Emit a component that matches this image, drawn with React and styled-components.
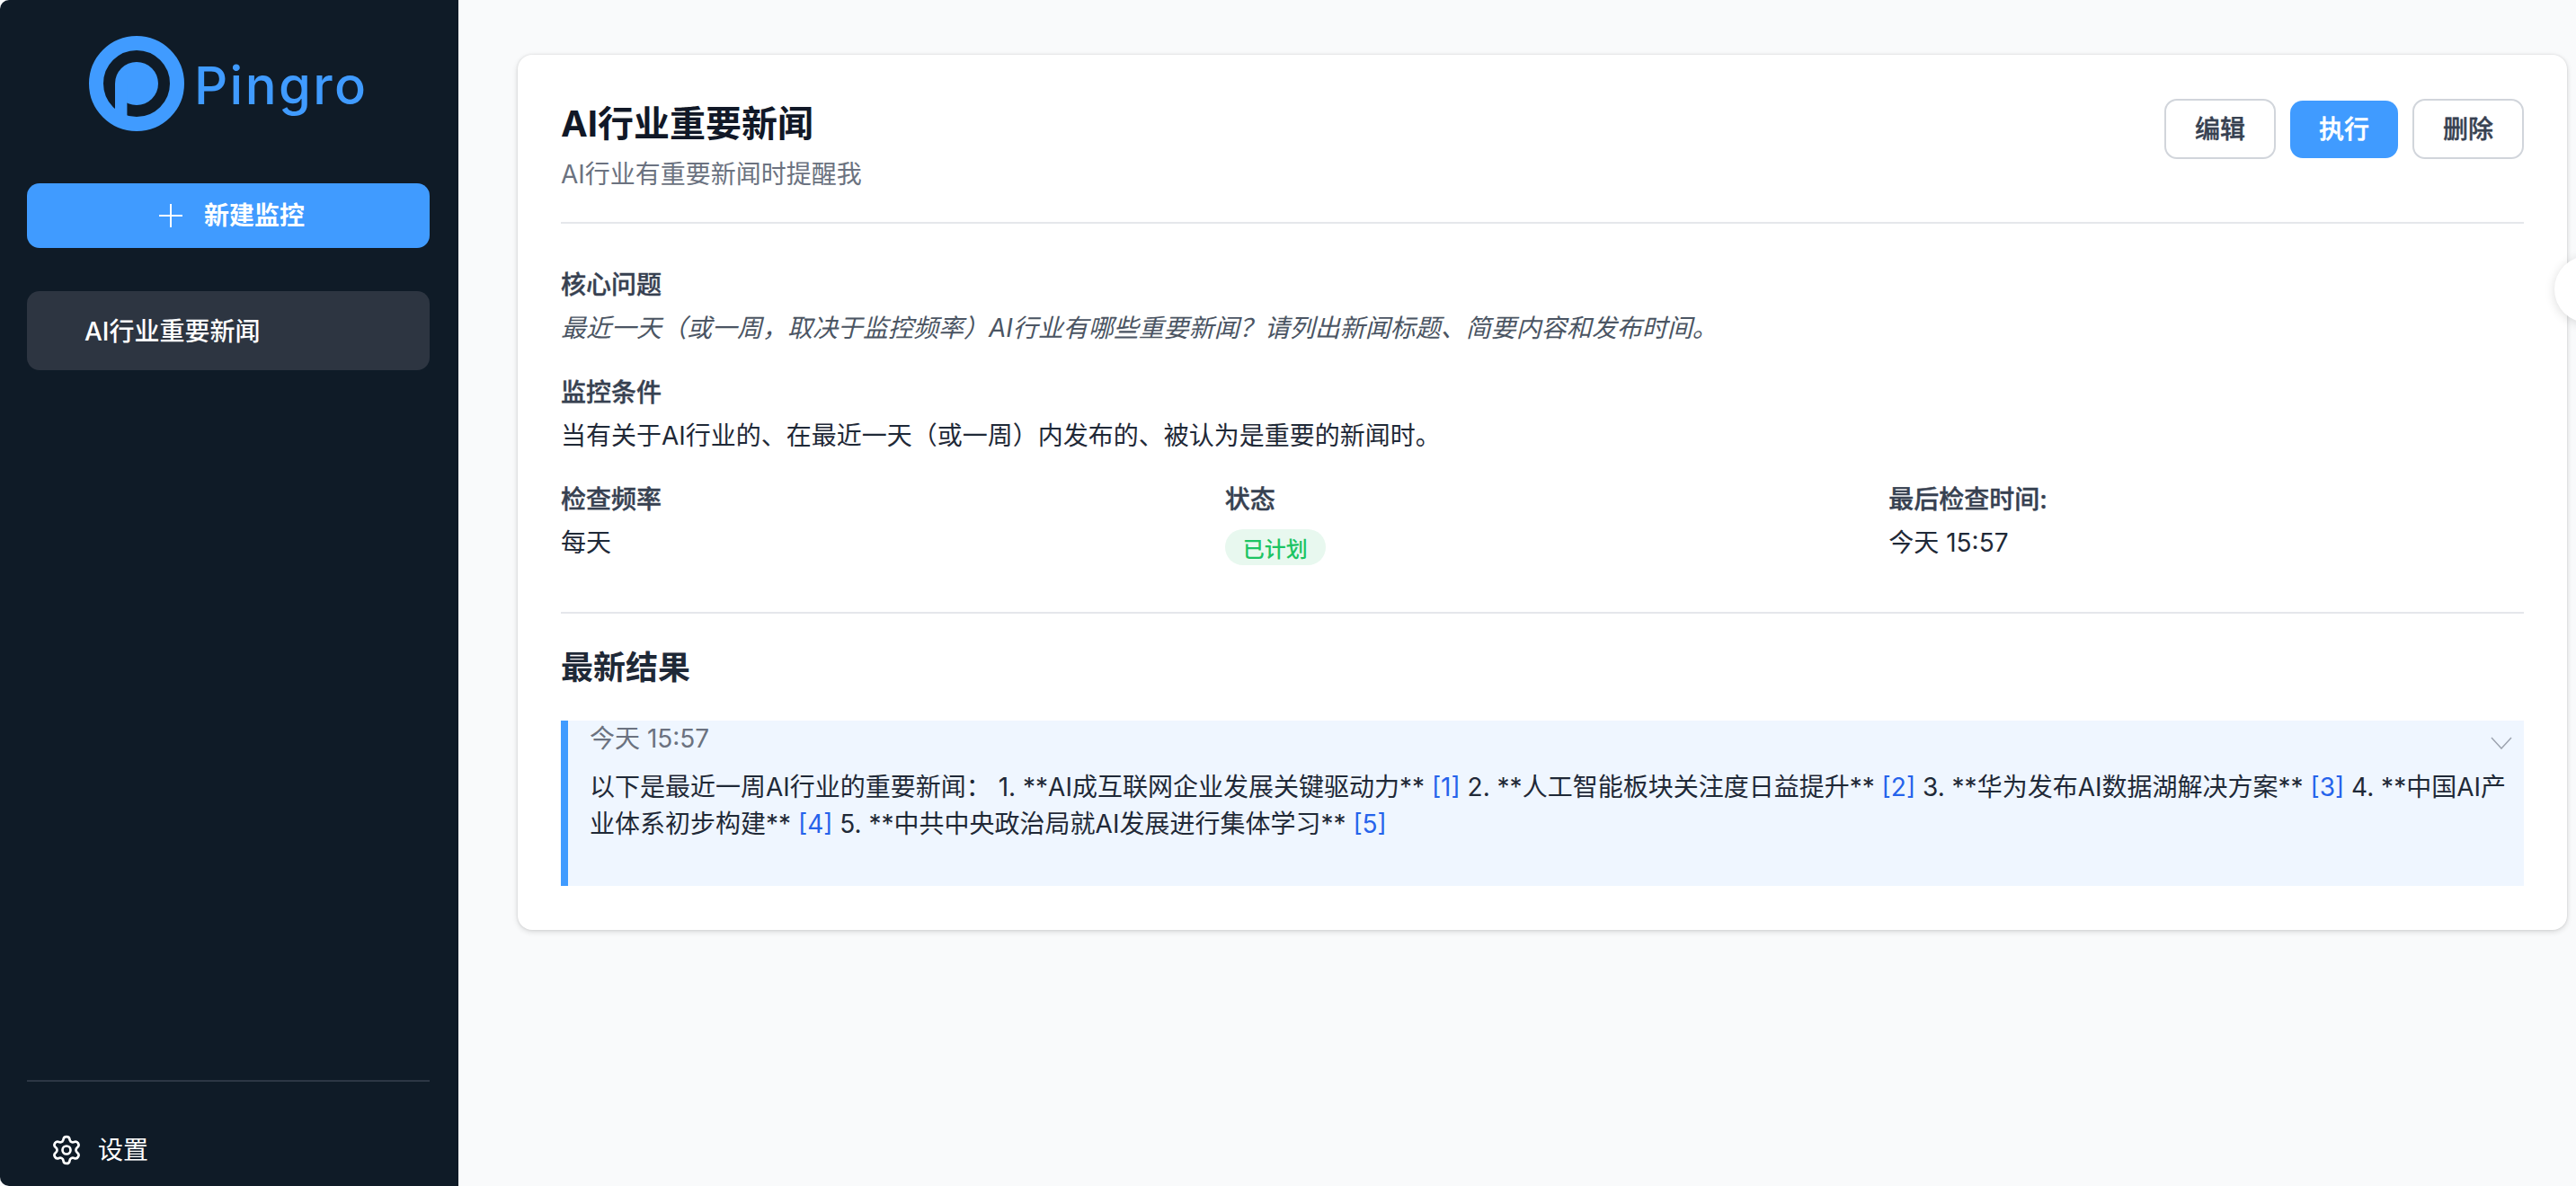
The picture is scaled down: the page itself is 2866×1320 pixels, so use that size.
import React from "react";
import styled, { createGlobalStyle } from "styled-components";
import { Settings } from "lucide-react";

const Global = createGlobalStyle`
  html, body { margin: 0; padding: 0; background: #fff; }
  body { font-family: Inter, "Noto Sans CJK SC", sans-serif; overflow: hidden; }
  * { box-sizing: border-box; }
`;

const Shell = styled.div`
  position: relative;
  display: flex;
  width: 100%;
  height: 1320px;
  overflow: hidden;
  background: #f9fafb;
`;

const Sidebar = styled.aside`
  display: flex;
  flex-direction: column;
  flex: 0 0 510px;
  padding: 0 32px 0 30px;
  background: #0f1b27;
  border-radius: 10px 0 0 10px;
`;

const Brand = styled.div`
  display: flex;
  align-items: center;
  gap: 11px;
  height: 204px;
  padding: 0 0 19px 69px;
`;

const BrandName = styled.span`
  font-family: Inter, sans-serif;
  font-size: 58px;
  line-height: 1;
  font-weight: 500;
  letter-spacing: 2.4px;
  color: #409bff;
  padding-top: 4px;
`;

const NewButton = styled.button`
  display: flex;
  align-items: center;
  justify-content: center;
  gap: 24px;
  width: 100%;
  height: 72px;
  flex: none;
  padding: 0 0 0 8px;
  border: 0;
  border-radius: 14px;
  background: #409bff;
  color: #fff;
  font: 600 28px/40px Inter, "Noto Sans CJK SC", sans-serif;
`;

const NavItem = styled.div`
  display: flex;
  align-items: center;
  height: 88px;
  margin-top: 48px;
  padding: 0 0 2px 64px;
  border-radius: 14px;
  background: #2d3541;
  color: #fff;
  font-size: 28px;
  font-weight: 500;
`;

const Footer = styled.div`
  margin-top: auto;
  border-top: 2px solid #2d3745;
  height: 118px;
  padding: 58px 0 0 26px;
  display: flex;
  align-items: flex-start;
  gap: 17px;
  color: #fff;
  font-size: 28px;
  line-height: 36px;
  font-weight: 400;
`;

const Main = styled.main`
  flex: 1;
  min-width: 0;
  padding: 61px 10px 0 66px;
`;

const Card = styled.section`
  height: 974px;
  padding: 49px 48px 0;
  background: #fff;
  border-radius: 16px;
  box-shadow: 0 2px 6px rgba(0, 0, 0, 0.14), 0 0 3px rgba(0, 0, 0, 0.1);
`;

const Header = styled.header`
  display: flex;
  justify-content: space-between;
  align-items: flex-start;
  height: 139px;
  border-bottom: 2px solid #e5e7eb;
`;

const Title = styled.h1`
  margin: 0;
  font-size: 40px;
  line-height: 56px;
  font-weight: 700;
  color: #111827;
`;

const Subtitle = styled.p`
  margin: 8px 0 0;
  font-size: 28px;
  line-height: 40px;
  color: #6b7280;
`;

const Actions = styled.div`
  display: flex;
  align-items: center;
  gap: 16px;
  height: 67px;
`;

const Action = styled.button`
  height: ${(p) => (p.$primary ? "64px" : "67px")};
  width: ${(p) => (p.$primary ? "120px" : "124px")};
  border: ${(p) => (p.$primary ? "0" : "2px solid #d1d5db")};
  border-radius: 14px;
  background: ${(p) => (p.$primary ? "#409bff" : "#fff")};
  color: ${(p) => (p.$primary ? "#fff" : "#374151")};
  font: 500 28px/40px Inter, "Noto Sans CJK SC", sans-serif;
  -webkit-text-stroke: 0.4px currentColor;
`;

const Block = styled.div`
  margin-top: ${(p) => p.$top}px;
`;

const Label = styled.div`
  font-size: 28px;
  line-height: 40px;
  font-weight: 500;
  -webkit-text-stroke: 0.4px currentColor;
  color: #374151;
  margin-bottom: 8px;
`;

const Question = styled.div`
  font-size: 28px;
  line-height: 40px;
  font-style: italic;
  color: #4b5563;
`;

const Value = styled.div`
  font-size: 28px;
  line-height: 40px;
  color: #1f2937;
`;

const Meta = styled.div`
  display: grid;
  grid-template-columns: repeat(3, 1fr);
  column-gap: 32px;
  margin-top: 31px;
  height: 147px;
  border-bottom: 2px solid #e5e7eb;
`;

const Badge = styled.span`
  display: inline-flex;
  align-items: center;
  height: 40px;
  padding: 0 20px;
  margin-top: 5px;
  border-radius: 20px;
  background: #e8f8ef;
  color: #1cc463;
  font-size: 24px;
  font-weight: 500;
`;

const ResultsTitle = styled.h2`
  margin: 38px 0 0;
  font-size: 36px;
  line-height: 44px;
  font-weight: 700;
  color: #1f2937;
`;

const Result = styled.article`
  position: relative;
  margin-top: 37px;
  height: 184px;
  padding: 0 16px 0 24px;
  border-left: 8px solid #409bff;
  background: #eff6ff;
`;

const Time = styled.div`
  font-size: 28px;
  line-height: 40px;
  color: #6b7280;
`;

const Body = styled.p`
  margin: 14px 0 0;
  font-size: 28px;
  line-height: 41px;
  color: #1f2937;
`;

const Ref = styled.a`
  color: #2563eb;
`;

const Chevron = styled.svg`
  position: absolute;
  top: 18px;
  right: 13px;
  width: 24px;
  height: 14px;
  fill: none;
  stroke: #9ca3af;
  stroke-width: 1.5;
`;

const Handle = styled.div`
  position: absolute;
  top: 285px;
  left: 2842px;
  width: 74px;
  height: 74px;
  border-radius: 50%;
  background: #fff;
  box-shadow: 0 2px 12px rgba(0, 0, 0, 0.14);
`;

const Logo = () => (
  <svg width="106" height="106" viewBox="-53 -53 106 106" style={{ flex: "none" }}>
    <circle r="45" fill="none" stroke="#409bff" strokeWidth="16" />
    <circle r="24" fill="#409bff" />
    <rect x="-24" y="0" width="13.4" height="40" fill="#409bff" />
  </svg>
);

const Plus = () => (
  <svg width="26" height="26" viewBox="0 0 26 26" stroke="#fff" strokeWidth="2" fill="none">
    <path d="M0 13h26M13 0v26" />
  </svg>
);

export default function App() {
  return (
    <Shell>
      <Global />
      <Sidebar>
        <Brand>
          <Logo />
          <BrandName>Pingro</BrandName>
        </Brand>
        <NewButton>
          <Plus />
          新建监控
        </NewButton>
        <NavItem>AI行业重要新闻</NavItem>
        <Footer>
          <Settings size={36} strokeWidth={1.8} />
          设置
        </Footer>
      </Sidebar>
      <Main>
        <Card>
          <Header>
            <div>
              <Title>AI行业重要新闻</Title>
              <Subtitle>AI行业有重要新闻时提醒我</Subtitle>
            </div>
            <Actions>
              <Action>编辑</Action>
              <Action $primary>执行</Action>
              <Action>删除</Action>
            </Actions>
          </Header>
          <Block $top={48}>
            <Label>核心问题</Label>
            <Question>最近一天（或一周，取决于监控频率）AI行业有哪些重要新闻？请列出新闻标题、简要内容和发布时间。</Question>
          </Block>
          <Block $top={32}>
            <Label>监控条件</Label>
            <Value>当有关于AI行业的、在最近一天（或一周）内发布的、被认为是重要的新闻时。</Value>
          </Block>
          <Meta>
            <div>
              <Label>检查频率</Label>
              <Value>每天</Value>
            </div>
            <div>
              <Label>状态</Label>
              <Badge>已计划</Badge>
            </div>
            <div>
              <Label>最后检查时间:</Label>
              <Value>今天 15:57</Value>
            </div>
          </Meta>
          <ResultsTitle>最新结果</ResultsTitle>
          <Result>
            <Time>今天 15:57</Time>
            <Chevron viewBox="0 0 24 14">
              <path d="M1 1l11 12L23 1" />
            </Chevron>
            <Body>
              以下是最近一周AI行业的重要新闻： 1. **AI成互联网企业发展关键驱动力** <Ref>[1]</Ref> 2. **人工智能板块关注度日益提升** <Ref>[2]</Ref> 3. **华为发布AI数据湖解决方案** <Ref>[3]</Ref> 4. **中国AI产业体系初步构建** <Ref>[4]</Ref> 5. **中共中央政治局就AI发展进行集体学习** <Ref>[5]</Ref>
            </Body>
          </Result>
        </Card>
      </Main>
      <Handle />
    </Shell>
  );
}
